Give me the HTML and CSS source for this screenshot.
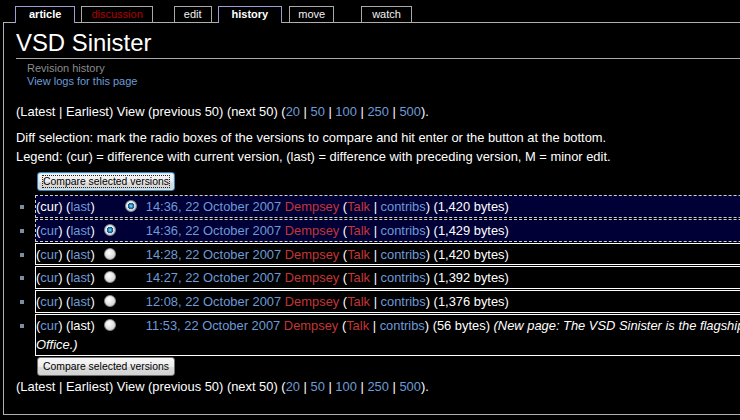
FILE: index.html
```html
<!DOCTYPE html>
<html>
<head>
<meta charset="utf-8">
<title>VSD Sinister - Revision history</title>
<link rel="stylesheet" href="styles.css">
</head>
<body>
<div class="tabs">
  <a class="tab active" href="#">article</a>
  <a class="tab new" href="#">discussion</a>
  <a class="tab tab-edit" href="#">edit</a>
  <a class="tab active" href="#">history</a>
  <a class="tab tab-move" href="#">move</a>
  <a class="tab tab-watch" href="#">watch</a>
</div>
<div class="content">
  <h1 class="title">VSD Sinister</h1>
  <div class="sub">Revision history<br><a class="link" href="#">View logs for this page</a></div>
  <p class="nav">(Latest | Earliest) View (previous 50) (next 50) (<a class="link" href="#">20</a> | <a class="link" href="#">50</a> | <a class="link" href="#">100</a> | <a class="link" href="#">250</a> | <a class="link" href="#">500</a>).</p>
  <p class="help">Diff selection: mark the radio boxes of the versions to compare and hit enter or the button at the bottom.<br>Legend: (cur) = difference with current version, (last) = difference with preceding version, M = minor edit.</p>
  <form class="history">
    <button type="button" class="cmp focused"><span class="cmp-label">Compare selected versions</span></button>
    <ul class="revs">
      <li class="rev sel"><span class="hl">(cur) (<a class="link" href="#">last</a>)</span><input class="radio r1 hidden" type="radio" name="oldid"><input class="radio r2" type="radio" name="diff" checked><a class="link date" href="#">14:36, 22 October 2007</a> <a class="user" href="#">Dempsey</a> (<a class="user" href="#">Talk</a> | <a class="link" href="#">contribs</a>) (1,420 bytes)</li>
      <li class="rev sel"><span class="hl">(<a class="link" href="#">cur</a>) (<a class="link" href="#">last</a>)</span><input class="radio r1" type="radio" name="oldid" checked><input class="radio r2 hidden" type="radio" name="diff"><a class="link date" href="#">14:36, 22 October 2007</a> <a class="user" href="#">Dempsey</a> (<a class="user" href="#">Talk</a> | <a class="link" href="#">contribs</a>) (1,429 bytes)</li>
      <li class="rev"><span class="hl">(<a class="link" href="#">cur</a>) (<a class="link" href="#">last</a>)</span><input class="radio r1" type="radio" name="oldid"><input class="radio r2 hidden" type="radio" name="diff"><a class="link date" href="#">14:28, 22 October 2007</a> <a class="user" href="#">Dempsey</a> (<a class="user" href="#">Talk</a> | <a class="link" href="#">contribs</a>) (1,420 bytes)</li>
      <li class="rev"><span class="hl">(<a class="link" href="#">cur</a>) (<a class="link" href="#">last</a>)</span><input class="radio r1" type="radio" name="oldid"><input class="radio r2 hidden" type="radio" name="diff"><a class="link date" href="#">14:27, 22 October 2007</a> <a class="user" href="#">Dempsey</a> (<a class="user" href="#">Talk</a> | <a class="link" href="#">contribs</a>) (1,392 bytes)</li>
      <li class="rev"><span class="hl">(<a class="link" href="#">cur</a>) (<a class="link" href="#">last</a>)</span><input class="radio r1" type="radio" name="oldid"><input class="radio r2 hidden" type="radio" name="diff"><a class="link date" href="#">12:08, 22 October 2007</a> <a class="user" href="#">Dempsey</a> (<a class="user" href="#">Talk</a> | <a class="link" href="#">contribs</a>) (1,376 bytes)</li>
      <li class="rev"><span class="hl">(<a class="link" href="#">cur</a>) (last)</span><input class="radio r1" type="radio" name="oldid"><input class="radio r2 hidden" type="radio" name="diff"><a class="link date" href="#">11:53, 22 October 2007</a> <a class="user" href="#">Dempsey</a> (<a class="user" href="#">Talk</a> | <a class="link" href="#">contribs</a>) (56 bytes) <span class="comment">(New page: The VSD Sinister is the flagship of the fleet, run by the Home<br>Office.)</span></li>
    </ul>
    <button type="button" class="cmp cmp-bottom"><span class="cmp-label">Compare selected versions</span></button>
  </form>
  <p class="nav nav-bottom">(Latest | Earliest) View (previous 50) (next 50) (<a class="link" href="#">20</a> | <a class="link" href="#">50</a> | <a class="link" href="#">100</a> | <a class="link" href="#">250</a> | <a class="link" href="#">500</a>).</p>
</div>
</body>
</html>
```
FILE: styles.css
```css
html, body {
  margin: 0;
  padding: 0;
  background: #000;
  overflow: hidden;
}
body {
  color: #fff;
  font-family: "Liberation Sans", Arial, sans-serif;
  font-size: 12.9px;
  width: 1100px;
}
a {
  text-decoration: none;
}
.link {
  color: #6d9bd8;
}
.user {
  color: #c43636;
}

/* tabs */
.tabs {
  display: flex;
  align-items: flex-end;
  height: 22px;
  padding-left: 15px;
  position: relative;
  z-index: 1;
}
.tab {
  display: block;
  height: 15px;
  line-height: 15px;
  margin-right: 6px;
  padding: 0 9px;
  border: 1px solid #a8a8a8;
  border-bottom: none;
  background: #000;
  color: #f2f2f2;
  font-size: 11px;
}
.tab.active {
  font-weight: bold;
  color: #fff;
  padding: 0 13px 1px;
  margin-bottom: -1px;
  border-color: #9c9cd6;
}
.tab.new {
  color: #b30000;
}
.tab-edit {
  margin-left: 15px;
}
.tab-move {
  margin-left: 1px;
  padding: 0 8px;
}
.tab-watch {
  margin-left: 21px;
  padding: 0 10px;
}

/* content */
.content {
  margin-left: 3px;
  width: 1000px;
  border: 1px solid #b0b0b0;
  padding: 4px 12px 18px;
}
.title {
  margin: 0;
  font-size: 23.9px;
  font-weight: normal;
  line-height: 31px;
  border-bottom: 1px solid #aaa;
}
.sub {
  margin: 3px 0 0 11px;
  font-size: 11px;
  line-height: 13px;
  color: #8c8c8c;
}
.nav {
  margin: 14px 0 0;
  line-height: 19px;
}
.help {
  margin: 7px 0 0;
  line-height: 19px;
}
.history {
  margin: 0;
}
.cmp {
  display: block;
  margin: 6px 0 0 21px;
  height: 19px;
  padding: 0 5px;
  font-family: "Liberation Sans", Arial, sans-serif;
  font-size: 10.4px;
  color: #000;
  background: linear-gradient(#f7f7f7, #ececec 50%, #dcdcdc 51%, #d2d2d2);
  border: 1px solid #707070;
  border-radius: 3px;
}
.cmp.focused {
  border-color: #3c7fb1;
  box-shadow: inset 0 0 0 1px #c5e7f8;
}
.cmp.focused .cmp-label {
  outline: 1px dotted #222;
  outline-offset: 0;
}
.cmp-bottom {
  margin-top: 1px;
}
.revs {
  margin: 4px 0 0;
  padding-left: 19px;
  list-style: square;
}
.rev {
  border: 1px solid #fff;
  line-height: 18.8px;
  padding-top: 2px;
  margin-bottom: 1px;
}
.rev::marker {
  color: #7a8ea3;
}
.rev.sel {
  border: 1px dashed #cfcfcf;
  background: #000036;
}
.radio {
  -webkit-appearance: none;
  appearance: none;
  box-sizing: border-box;
  width: 12px;
  height: 12px;
  margin: 0 0 0 9px;
  padding: 0;
  border: 1px solid #8e8e8e;
  border-radius: 50%;
  vertical-align: -1px;
  background: radial-gradient(circle at 40% 35%, #ffffff 0, #e6e6e6 45%, #c4c4c4 100%);
}
.radio:checked {
  border-color: #7d8d99;
  background:
    radial-gradient(circle at 50% 50%, #9fe6ff 0, #3aa0d0 1.2px, #0f4f80 3px, rgba(15, 79, 128, 0) 3.4px),
    radial-gradient(circle at 40% 35%, #ffffff 0, #e2e2e2 45%, #bcbcbc 100%);
}
.radio.hidden {
  visibility: hidden;
}
.date {
  margin-left: 9px;
}
.comment {
  font-style: italic;
}
.nav-bottom {
  margin-top: 1px;
}
```
